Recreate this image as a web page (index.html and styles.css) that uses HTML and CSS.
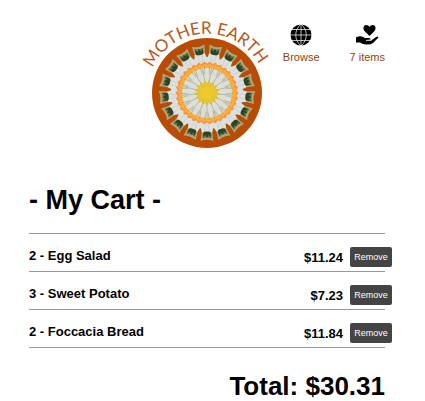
FILE: index.html
```html
<!DOCTYPE html>
<html lang="en">
<head>
<meta charset="utf-8">
<title>Mother Earth - My Cart</title>
<link rel="stylesheet" href="styles.css">
</head>
<body>
<div class="page">
  <header class="header">
    <a class="logo" href="#">
      <svg width="130" height="130" viewBox="-65 -73 130 130" role="img" aria-label="Mother Earth">
        <defs>
          <path id="arc" d="M-54.500 -25A60 60 0 0 1 56 21.500"/>
          <g id="petal">
            <path d="M-5 -38L-6.500 -48Q0 -45.500 6.500 -48L5 -38Z" fill="#b0a67c"/>
            <path d="M-4.500 -45.500Q0 -43.500 4.500 -45.500L4 -38H-4Z" fill="#65724a"/>
            <path d="M-4 -44L-1.500 -42L0 -45L1.500 -42L4 -44L3.500 -38H-3.500Z" fill="#2f4420"/>
            <path d="M-5 -40L-2 -38.500H2L5 -40L6.500 -34L5 -25H-5L-6.500 -34Z" fill="#dce0df"/>
            <path d="M-2.500 -38L-1 -31M2.500 -38L1 -31" stroke="#c0c5be" stroke-width=".5"/>
          </g>
          <g id="ring">
            <path d="M-5.500 -29L-3 -31.500L0 -29.500L3 -31.500L5.500 -29L4 -24H-4Z" fill="#f79645"/>
            <path d="M-5 -27.500L-2 -29L1 -27.500L4 -29L5 -26.500L4 -24H-4Z" fill="#fcb238"/>
          </g>
          <g id="spoke">
            <path d="M0 -12V-25M-2.500 -27L-1 -20M2.500 -27L1 -20" stroke="#8e9187" stroke-width=".5"/>
            <path d="M-2.500 -19Q0 -20 2.500 -19" fill="none" stroke="#b8b9ac" stroke-width=".5"/>
            <path d="M-2 -9L0 -13.500L2 -9Z" fill="#d8bd3b"/>
          </g>
        </defs>
        <circle r="55" fill="#b94c05"/>
        <circle r="36" fill="#dce0df"/>
        <g>
          <use href="#petal" transform="rotate(180)"/><use href="#petal" transform="rotate(201.200)"/><use href="#petal" transform="rotate(222.400)"/><use href="#petal" transform="rotate(243.500)"/><use href="#petal" transform="rotate(264.700)"/><use href="#petal" transform="rotate(285.900)"/><use href="#petal" transform="rotate(307.100)"/><use href="#petal" transform="rotate(328.200)"/><use href="#petal" transform="rotate(349.400)"/><use href="#petal" transform="rotate(10.600)"/><use href="#petal" transform="rotate(31.800)"/><use href="#petal" transform="rotate(52.900)"/><use href="#petal" transform="rotate(74.100)"/><use href="#petal" transform="rotate(95.300)"/><use href="#petal" transform="rotate(116.500)"/><use href="#petal" transform="rotate(137.600)"/><use href="#petal" transform="rotate(158.800)"/>
        </g>
        <circle r="29" fill="#f9a43e"/>
        <g>
          <use href="#ring" transform="rotate(180)"/><use href="#ring" transform="rotate(201.200)"/><use href="#ring" transform="rotate(222.400)"/><use href="#ring" transform="rotate(243.500)"/><use href="#ring" transform="rotate(264.700)"/><use href="#ring" transform="rotate(285.900)"/><use href="#ring" transform="rotate(307.100)"/><use href="#ring" transform="rotate(328.200)"/><use href="#ring" transform="rotate(349.400)"/><use href="#ring" transform="rotate(10.600)"/><use href="#ring" transform="rotate(31.800)"/><use href="#ring" transform="rotate(52.900)"/><use href="#ring" transform="rotate(74.100)"/><use href="#ring" transform="rotate(95.300)"/><use href="#ring" transform="rotate(116.500)"/><use href="#ring" transform="rotate(137.600)"/><use href="#ring" transform="rotate(158.800)"/>
        </g>
        <circle r="25" fill="#dddfd6"/>
        <g>
          <use href="#spoke" transform="rotate(180)"/><use href="#spoke" transform="rotate(201.200)"/><use href="#spoke" transform="rotate(222.400)"/><use href="#spoke" transform="rotate(243.500)"/><use href="#spoke" transform="rotate(264.700)"/><use href="#spoke" transform="rotate(285.900)"/><use href="#spoke" transform="rotate(307.100)"/><use href="#spoke" transform="rotate(328.200)"/><use href="#spoke" transform="rotate(349.400)"/><use href="#spoke" transform="rotate(10.600)"/><use href="#spoke" transform="rotate(31.800)"/><use href="#spoke" transform="rotate(52.900)"/><use href="#spoke" transform="rotate(74.100)"/><use href="#spoke" transform="rotate(95.300)"/><use href="#spoke" transform="rotate(116.500)"/><use href="#spoke" transform="rotate(137.600)"/><use href="#spoke" transform="rotate(158.800)"/>
        </g>
        <circle r="10" fill="#e5c43a"/>
        <circle r="6" fill="#f0cb27"/>
        <text class="logo-text"><textPath href="#arc">MOTHER EARTH</textPath></text>
      </svg>
    </a>
    <nav class="nav">
      <a class="nav-link" href="#">
        <svg width="22" height="22" viewBox="0 0 22 22" aria-hidden="true">
          <circle cx="11" cy="11" r="10.500" fill="#000"/>
          <path d="M11 0V22M0 11H22M2 5.500H20M2 16.500H20M11 0C4 6 4 16 11 22M11 0C18 6 18 16 11 22" fill="none" stroke="#fff" stroke-width=".7"/>
        </svg>
        <span>Browse</span>
      </a>
      <a class="nav-link" href="#">
        <svg width="24" height="22" viewBox="0 0 24 22" aria-hidden="true">
          <path d="M14.500 12L9.500 7C7.500 4.500 8.500 1 11.500 1C13 1 14 2 14.500 3C15 2 16 1 17.500 1C20.500 1 21.500 4.500 19.500 7Z"/>
          <path d="M1 13.500Q4 11.500 7 12.500L10 14H14Q16 14 15.500 15.500L11 16V16.800H16L21 13Q23 12 23.500 13.500L18 19Q16 20.500 13 20.500Q8 21 5 18.500L1 18.500Z"/>
        </svg>
        <span>7 items</span>
      </a>
    </nav>
  </header>
  <main>
    <h1 class="title">- My Cart -</h1>
    <ul class="cart">
      <li class="item"><span class="name">2 - Egg Salad</span><span class="price">$11.24</span><button class="remove" type="button">Remove</button></li>
      <li class="item"><span class="name">3 - Sweet Potato</span><span class="price">$7.23</span><button class="remove" type="button">Remove</button></li>
      <li class="item"><span class="name">2 - Foccacia Bread</span><span class="price">$11.84</span><button class="remove" type="button">Remove</button></li>
    </ul>
    <p class="total">Total: $30.31</p>
  </main>
</div>
</body>
</html>
```
FILE: styles.css
```css
* {
  box-sizing: border-box;
}

body {
  margin: 0;
  background: #fff;
  color: #000;
  font-family: "Liberation Sans", Arial, sans-serif;
}

.page {
  padding: 20px 40px 0 29px;
}

.header {
  display: grid;
  grid-template-columns: 1fr 130px 1fr;
  align-items: start;
}

.logo {
  grid-column: 2;
}

.logo svg {
  display: block;
  overflow: visible;
}

.logo-text {
  fill: #b65a22;
  font-family: Lato, sans-serif;
  font-size: 17px;
}

.nav {
  display: flex;
  justify-content: flex-end;
  gap: 30px;
  padding-top: 4px;
}

.nav-link {
  display: flex;
  flex-direction: column;
  align-items: center;
  gap: 4px;
  color: #8b4513;
  font-size: 11px;
  line-height: 14px;
  text-decoration: none;
  white-space: nowrap;
}

.title {
  margin: 34px 0 17px;
  font-size: 27px;
  line-height: 32px;
}

.cart {
  margin: 0;
  padding: 0;
  border-top: 1px solid #999;
  list-style: none;
}

.item {
  display: flex;
  align-items: flex-end;
  height: 38px;
  padding-bottom: 4px;
  border-bottom: 1px solid #999;
  font-size: 13px;
  font-weight: bold;
  line-height: 20px;
}

.name {
  flex: 1;
  padding-bottom: 1px;
}

.price {
  line-height: 18px;
}

.remove {
  width: 42px;
  height: 20px;
  margin: 0 -7px 0 7px;
  padding: 0;
  border: 0;
  border-radius: 2px;
  background: #444;
  color: #fff;
  font-family: inherit;
  font-size: 9px;
}

.total {
  margin: 22px 0 0;
  font-size: 26px;
  font-weight: bold;
  line-height: 32px;
  text-align: right;
}
```
